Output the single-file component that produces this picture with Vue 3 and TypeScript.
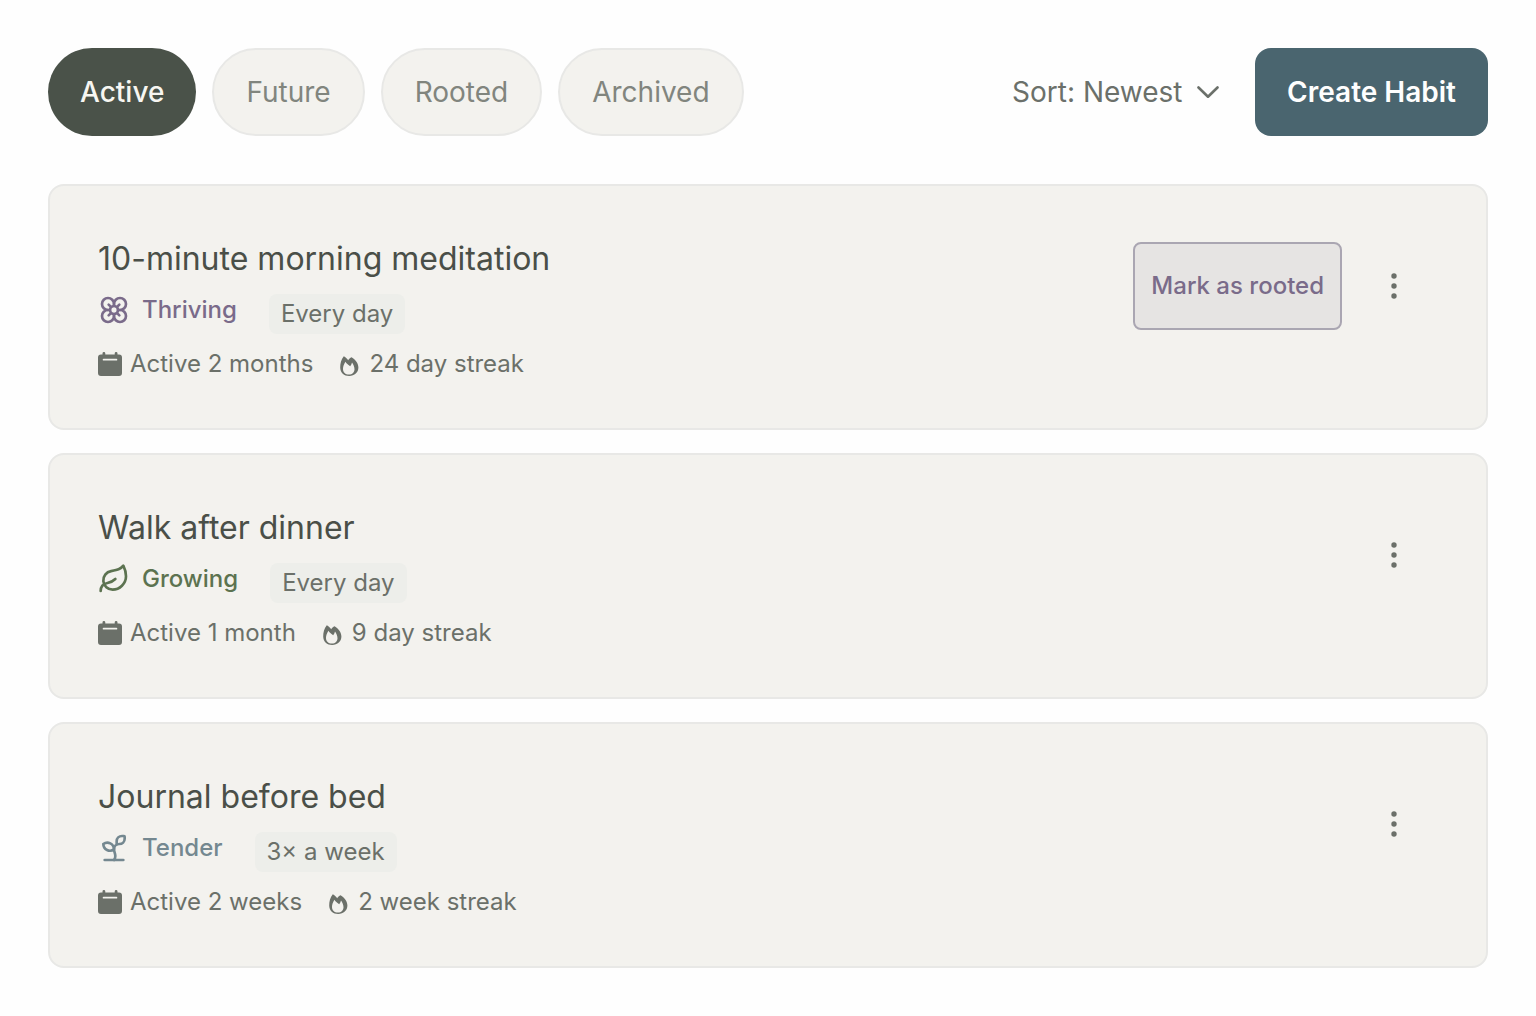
<script setup lang="ts">
import { ref } from 'vue'

type Stage = 'thriving' | 'growing' | 'tender'

interface Habit {
  id: number
  title: string
  stage: Stage
  label: string
  cadence: string
  active: string
  streak: string
  canRoot: boolean
}

const tabs = ['Active', 'Future', 'Rooted', 'Archived']
const current = ref('Active')
const sort = ref('newest')

const habits: Habit[] = [
  { id: 1, title: '10-minute morning meditation', stage: 'thriving', label: 'Thriving', cadence: 'Every day', active: 'Active 2 months', streak: '24 day streak', canRoot: true },
  { id: 2, title: 'Walk after dinner', stage: 'growing', label: 'Growing', cadence: 'Every day', active: 'Active 1 month', streak: '9 day streak', canRoot: false },
  { id: 3, title: 'Journal before bed', stage: 'tender', label: 'Tender', cadence: '3× a week', active: 'Active 2 weeks', streak: '2 week streak', canRoot: false },
]

const stagePaths: Record<Stage, string[]> = {
  thriving: [
    'M15 12a3 3 0 1 1-6 0a3 3 0 1 1 6 0',
    'M12 16.5A4.5 4.5 0 1 1 7.5 12 4.5 4.5 0 1 1 12 7.5a4.5 4.5 0 1 1 4.5 4.5 4.5 4.5 0 1 1-4.5 4.5',
    'M12 7.5V9M7.5 12H9M16.5 12H15M12 16.5V15',
    'm8 8 1.88 1.88M14.12 9.88 16 8M8 16l1.88-1.88M14.12 14.12 16 16',
  ],
  growing: [
    'M11 20A7 7 0 0 1 9.8 6.1C15.5 5 17 4.48 19 2c1 2 2 4.18 2 8 0 5.5-4.78 10-10 10Z',
    'M2 21c0-3 1.85-5.36 5.08-6C9.5 14.52 12 13 13 12',
  ],
  tender: [
    'M14 9.536V7a4 4 0 0 1 4-4h1.5a.5.5 0 0 1 .5.5V5a4 4 0 0 1-4 4 4 4 0 0 0-4 4c0 2 1 3 1 5a5 5 0 0 1-1 3',
    'M4 9a5 5 0 0 1 8 4 5 5 0 0 1-8-4',
    'M5 21h14',
  ],
}
</script>

<template>
  <main class="page">
    <header class="toolbar">
      <nav class="tabs" aria-label="Habit filter">
        <button
          v-for="tab in tabs"
          :key="tab"
          type="button"
          class="tab"
          :class="{ 'tab--on': tab === current }"
          :aria-pressed="tab === current"
          @click="current = tab"
        >{{ tab }}</button>
      </nav>
      <div class="sort">
        <select v-model="sort" class="sort__select" aria-label="Sort habits">
          <option value="newest">Sort: Newest</option>
          <option value="oldest">Sort: Oldest</option>
        </select>
        <svg class="sort__chevron" viewBox="0 0 24 12" aria-hidden="true"><path d="M3.500 1.500 13 10.700 22.500 1.500" /></svg>
      </div>
      <button type="button" class="create">Create Habit</button>
    </header>

    <ul class="list">
      <li v-for="habit in habits" :key="habit.id" class="card">
        <div class="info">
          <h2 class="title">{{ habit.title }}</h2>
          <div class="status">
            <span class="stage" :class="`stage--${habit.stage}`">
              <svg class="stage__icon" viewBox="0 0 24 24" aria-hidden="true">
                <path v-for="d in stagePaths[habit.stage]" :key="d" :d="d" />
              </svg>
              {{ habit.label }}
            </span>
            <span class="cadence">{{ habit.cadence }}</span>
          </div>
          <div class="meta">
            <span class="meta__item">
              <svg class="meta__icon" viewBox="0 0 24 24" aria-hidden="true">
                <path
                  fill-rule="evenodd"
                  d="M4.500 1.400a1.400 1.400 0 0 1 2.800 0V2.400h9.400V1.400a1.400 1.400 0 0 1 2.800 0V2.400H21a3 3 0 0 1 3 3V21a3 3 0 0 1-3 3H3a3 3 0 0 1-3-3V5.400a3 3 0 0 1 3-3h1.500ZM5.600 6.800a.9.9 0 0 0 0 1.800h12.800a.9.9 0 0 0 0-1.800Z"
                />
              </svg>
              {{ habit.active }}
            </span>
            <span class="meta__item">
              <svg class="meta__icon" viewBox="0 0 24 24" aria-hidden="true">
                <path
                  fill-rule="evenodd"
                  d="M6.800 4.200C8.500 5 10 6.400 11.200 8.200C12 6.900 13 5.900 14.600 5.300C18.500 7.800 21.400 11.400 21.400 15.600C21.400 20.600 17.500 24 12.200 24C7 24 3.200 20.600 3.200 15.500C3.200 11.200 4.200 7.300 6.800 4.200ZM8.400 9.800C6.800 12.400 6 14.600 6 16.900C6 20.300 8.400 22.500 11.900 22.500C15.300 22.500 17.500 20.200 17.500 17.200C17.500 15 16.400 12.600 15 10.600C14.700 12 14.100 13.200 13.200 14.200C11.400 13.200 9.800 11.800 8.400 9.800Z"
                />
              </svg>
              {{ habit.streak }}
            </span>
          </div>
        </div>
        <div class="actions">
          <button v-if="habit.canRoot" type="button" class="root">Mark as rooted</button>
          <button type="button" class="more" :aria-label="`More actions for ${habit.title}`">
            <svg class="more__icon" viewBox="0 0 32 32" aria-hidden="true">
              <circle cx="16" cy="6" r="2.700" /><circle cx="16" cy="16" r="2.700" /><circle cx="16" cy="26" r="2.700" />
            </svg>
          </button>
        </div>
      </li>
    </ul>
  </main>
</template>

<style>
body {
  margin: 0;
  background: #fefefe;
}
</style>

<style scoped>
.page {
  box-sizing: border-box;
  padding: 48px;
  font-family: Inter, "Liberation Sans", sans-serif;
  font-optical-sizing: none;
  font-size: 24px;
  line-height: 32px;
  color: #6b7069;
}

button,
select {
  font: inherit;
  font-optical-sizing: none;
  cursor: pointer;
}

.toolbar {
  display: flex;
  align-items: center;
  font-size: 28px;
}

.tabs {
  display: flex;
  gap: 16px;
  margin-right: auto;
}

.tab {
  box-sizing: border-box;
  height: 88px;
  padding: 0 32px;
  border: 2px solid #e8e8e6;
  border-radius: 44px;
  background: #f3f2ee;
  color: #81857e;
}

.tab--on {
  border: 0;
  background: #4a5249;
  color: #f7f6f1;
  font-weight: 500;
}

.sort {
  position: relative;
  margin-right: 36px;
}

.sort__select {
  appearance: none;
  display: block;
  height: 88px;
  padding: 0 36px 0 0;
  border: 0;
  background: transparent;
  color: #6b706a;
}

.sort__chevron {
  position: absolute;
  right: 0;
  top: 50%;
  width: 24px;
  height: 12px;
  transform: translateY(-50%);
  fill: none;
  stroke: #6b706a;
  stroke-width: 2.600;
  stroke-linecap: round;
  stroke-linejoin: round;
  pointer-events: none;
}

.create {
  height: 88px;
  padding: 0 32px;
  border: 0;
  border-radius: 16px;
  background: #4a656f;
  color: #fefefe;
  font-weight: 600;
}

.list {
  display: flex;
  flex-direction: column;
  gap: 23px;
  margin: 48px 0 0;
  padding: 0;
  list-style: none;
}

.card {
  display: flex;
  align-items: flex-start;
  justify-content: space-between;
  padding: 48px;
  border: 2px solid #e8e8e6;
  border-radius: 16px;
  background: #f3f2ee;
}

.title {
  margin: 0;
  color: #4a4f48;
  font-size: 32px;
  font-weight: 400;
  line-height: 50px;
}

.status {
  display: flex;
  align-items: flex-start;
  gap: 32px;
  margin: 10px 0 14px;
}

.stage {
  display: flex;
  align-items: center;
  gap: 12px;
  font-weight: 500;
}

.stage__icon {
  width: 32px;
  height: 32px;
  fill: none;
  stroke: currentColor;
  stroke-width: 2;
  stroke-linecap: round;
  stroke-linejoin: round;
}

.stage--thriving {
  color: #7a6b8a;
}

.stage--growing {
  color: #5c7350;
}

.stage--tender {
  color: #748890;
}

.cadence {
  padding: 4px 12px;
  border-radius: 8px;
  background: #edeeea;
}

.meta {
  display: flex;
  gap: 24px;
}

.meta__item {
  display: flex;
  align-items: center;
  gap: 8px;
}

.meta__icon {
  width: 24px;
  height: 24px;
  fill: #6b7069;
}

.actions {
  display: flex;
  gap: 8px;
  margin-top: 8px;
}

.root {
  height: 88px;
  padding: 0 16px;
  border: 2px solid #aaa6b2;
  border-radius: 8px;
  background: #e6e4e3;
  color: #7a6b8a;
  font-weight: 500;
}

.more {
  display: grid;
  place-items: center;
  width: 88px;
  height: 88px;
  padding: 0;
  border: 0;
  background: transparent;
}

.more__icon {
  width: 32px;
  height: 32px;
  fill: #6b7069;
}
</style>
